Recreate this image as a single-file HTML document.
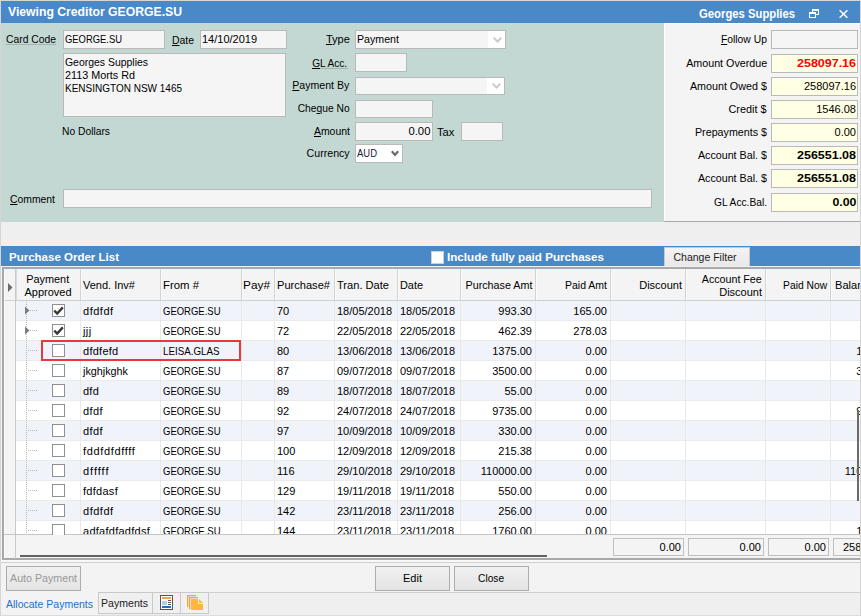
<!DOCTYPE html>
<html><head><meta charset="utf-8"><style>
html,body{margin:0;padding:0;width:861px;height:616px;overflow:hidden;background:#f0f0f0;font-family:"Liberation Sans", sans-serif}
#root{position:relative;width:861px;height:616px;overflow:hidden}
#root>div,#root>svg{position:absolute}
u{text-decoration:underline;text-underline-offset:1px}
</style></head><body><div id="root">
<div style="left:0px;top:0px;width:861px;height:616px;background:#f0f0f0"></div>
<div style="left:0px;top:0px;width:861px;height:1px;background:#d6d6d6"></div>
<div style="left:0px;top:0px;width:1px;height:616px;background:#d6d6d6"></div>
<div style="left:860px;top:0px;width:1px;height:616px;background:#dcdcdc"></div>
<div style="left:1px;top:1px;width:859px;height:22px;background:#4a89c8"></div>
<svg style="left:808px;top:8px" width="12" height="11" viewBox="0 0 12 11" shape-rendering="crispEdges" fill="#fff"><rect x="4" y="1" width="7" height="2"/><rect x="10" y="1" width="1" height="6"/><rect x="8" y="6" width="3" height="1"/><rect x="4" y="1" width="1" height="3"/><rect x="1" y="4" width="7" height="2"/><rect x="1" y="4" width="1" height="6"/><rect x="7" y="4" width="1" height="6"/><rect x="1" y="9" width="7" height="1"/></svg>
<svg style="left:839px;top:10px" width="9" height="8" viewBox="0 0 9 8"><path d="M0.6 0.3L8.4 7.7M8.4 0.3L0.6 7.7" stroke="#fff" stroke-width="1.5"/></svg>
<div style="left:1px;top:23px;width:663px;height:199px;background:#c3d8d2"></div>
<div style="left:664px;top:23px;width:196px;height:198px;background:#f4f4f4;border-left:1px solid #fff;border-top:1px solid #fff;box-sizing:border-box"></div>
<div style="left:664px;top:221px;width:196px;height:1px;background:#a9a9a9"></div>
<div style="left:6px;top:44px;width:50px;height:1px;background:#a8b4b0"></div>
<div style="left:63px;top:30px;width:102px;height:19px;background:#f5f5f5;border:1px solid #b9b9b9;box-sizing:border-box"></div>
<div style="left:200px;top:30px;width:87px;height:19px;background:#f5f5f5;border:1px solid #b9b9b9;box-sizing:border-box"></div>
<div style="left:63px;top:53px;width:223px;height:64px;background:#f5f5f5;border:1px solid #b9b9b9;box-sizing:border-box"></div>
<div style="left:355px;top:30px;width:151px;height:19px;background:#f5f5f5;border:1px solid #b9b9b9;box-sizing:border-box"></div>
<div style="left:488px;top:31px;width:17px;height:17px;background:#fff"></div>
<div style="left:312px;top:68px;width:36px;height:1px;background:#a8b4b0"></div>
<div style="left:355px;top:53px;width:52px;height:19px;background:#f5f5f5;border:1px solid #b9b9b9;box-sizing:border-box"></div>
<div style="left:355px;top:77px;width:150px;height:18px;background:#f5f5f5;border:1px solid #b9b9b9;box-sizing:border-box"></div>
<div style="left:487px;top:78px;width:17px;height:16px;background:#fff"></div>
<div style="left:355px;top:100px;width:78px;height:18px;background:#f5f5f5;border:1px solid #b9b9b9;box-sizing:border-box"></div>
<div style="left:355px;top:122px;width:78px;height:19px;background:#f5f5f5;border:1px solid #b9b9b9;box-sizing:border-box"></div>
<div style="left:461px;top:122px;width:42px;height:19px;background:#f5f5f5;border:1px solid #b9b9b9;box-sizing:border-box"></div>
<div style="left:355px;top:144px;width:48px;height:19px;background:#fff;border:1px solid #b9b9b9;box-sizing:border-box"></div>
<svg style="left:493px;top:37px" width="9" height="6" viewBox="0 0 9 6"><path d="M0.7 0.7L4.5 4.6L8.3 0.7" fill="none" stroke="#c8c8c8" stroke-width="1.9"/></svg>
<svg style="left:492px;top:83px" width="9" height="6" viewBox="0 0 9 6"><path d="M0.7 0.7L4.5 4.6L8.3 0.7" fill="none" stroke="#c8c8c8" stroke-width="1.9"/></svg>
<svg style="left:391px;top:150px" width="8" height="7" viewBox="0 0 8 7"><path d="M0.8 1.2L4 4.8L7.2 1.2" fill="none" stroke="#6a6a6a" stroke-width="2.1"/></svg>
<div style="left:63px;top:189px;width:589px;height:19px;background:#f5f5f5;border:1px solid #b9b9b9;box-sizing:border-box"></div>
<div style="left:771px;top:30px;width:87px;height:19px;background:#f5f5f5;border:1px solid #b9b9b9;box-sizing:border-box"></div>
<div style="left:771px;top:54px;width:87px;height:19px;background:#ffffe3;border:1px solid #b9b9b9;box-sizing:border-box"></div>
<div style="left:771px;top:77px;width:87px;height:19px;background:#ffffe3;border:1px solid #b9b9b9;box-sizing:border-box"></div>
<div style="left:771px;top:100px;width:87px;height:19px;background:#ffffe3;border:1px solid #b9b9b9;box-sizing:border-box"></div>
<div style="left:771px;top:123px;width:87px;height:19px;background:#ffffe3;border:1px solid #b9b9b9;box-sizing:border-box"></div>
<div style="left:771px;top:146px;width:87px;height:19px;background:#ffffe3;border:1px solid #b9b9b9;box-sizing:border-box"></div>
<div style="left:771px;top:169px;width:87px;height:19px;background:#ffffe3;border:1px solid #b9b9b9;box-sizing:border-box"></div>
<div style="left:771px;top:193px;width:87px;height:19px;background:#ffffe3;border:1px solid #b9b9b9;box-sizing:border-box"></div>
<div style="left:1px;top:222px;width:859px;height:24px;background:#efefef"></div>
<div style="left:1px;top:246px;width:859px;height:20px;background:#4a89c8"></div>
<div style="left:431px;top:251px;width:13px;height:13px;background:#fff;border:1px solid #d0d0d0;box-sizing:border-box"></div>
<div style="left:664px;top:247px;width:86px;height:19px;background:linear-gradient(#f4f4f4,#e8e8e8);border:1px solid #c9c9c9;border-bottom:none;box-sizing:border-box"></div>
<div style="left:1px;top:266px;width:859px;height:300px;background:#f0f0f0"></div>
<div style="left:2px;top:267px;width:858px;height:293px;background:#a9a9a9"></div>
<div style="left:4px;top:269px;width:856px;height:289px;background:#f4f4f4"></div>
<div style="left:4px;top:269px;width:856px;height:31px;background:#f4f4f4"></div>
<div style="left:4px;top:300px;width:856px;height:1px;background:#cfcfcf"></div>
<div style="left:15px;top:269px;width:1px;height:290px;background:#c9c9c9"></div>
<div style="left:16px;top:269px;width:1px;height:31px;background:#dadada"></div>
<div style="left:4px;top:269px;width:1px;height:289px;background:#fafafa"></div>
<div style="left:80px;top:269px;width:1px;height:31px;background:#d2d2d2"></div>
<div style="left:81px;top:269px;width:1px;height:31px;background:#fbfbfb"></div>
<div style="left:160px;top:269px;width:1px;height:31px;background:#d2d2d2"></div>
<div style="left:161px;top:269px;width:1px;height:31px;background:#fbfbfb"></div>
<div style="left:241px;top:269px;width:1px;height:31px;background:#d2d2d2"></div>
<div style="left:242px;top:269px;width:1px;height:31px;background:#fbfbfb"></div>
<div style="left:274px;top:269px;width:1px;height:31px;background:#d2d2d2"></div>
<div style="left:275px;top:269px;width:1px;height:31px;background:#fbfbfb"></div>
<div style="left:334px;top:269px;width:1px;height:31px;background:#d2d2d2"></div>
<div style="left:335px;top:269px;width:1px;height:31px;background:#fbfbfb"></div>
<div style="left:397px;top:269px;width:1px;height:31px;background:#d2d2d2"></div>
<div style="left:398px;top:269px;width:1px;height:31px;background:#fbfbfb"></div>
<div style="left:460px;top:269px;width:1px;height:31px;background:#d2d2d2"></div>
<div style="left:461px;top:269px;width:1px;height:31px;background:#fbfbfb"></div>
<div style="left:535px;top:269px;width:1px;height:31px;background:#d2d2d2"></div>
<div style="left:536px;top:269px;width:1px;height:31px;background:#fbfbfb"></div>
<div style="left:610px;top:269px;width:1px;height:31px;background:#d2d2d2"></div>
<div style="left:611px;top:269px;width:1px;height:31px;background:#fbfbfb"></div>
<div style="left:685px;top:269px;width:1px;height:31px;background:#d2d2d2"></div>
<div style="left:686px;top:269px;width:1px;height:31px;background:#fbfbfb"></div>
<div style="left:765px;top:269px;width:1px;height:31px;background:#d2d2d2"></div>
<div style="left:766px;top:269px;width:1px;height:31px;background:#fbfbfb"></div>
<div style="left:830px;top:269px;width:1px;height:31px;background:#d2d2d2"></div>
<div style="left:831px;top:269px;width:1px;height:31px;background:#fbfbfb"></div>
<svg style="left:8px;top:283px" width="5" height="9" viewBox="0 0 5 9"><path d="M0 0L4.5 4.5L0 9z" fill="#6b6b6b"/></svg>
<div style="left:16px;top:301px;width:844px;height:19px;background:#f0f3f9"></div>
<div style="left:16px;top:320px;width:844px;height:20px;background:#ffffff"></div>
<div style="left:16px;top:320px;width:844px;height:1px;background:#ebebeb"></div>
<div style="left:16px;top:340px;width:844px;height:20px;background:#f0f3f9"></div>
<div style="left:16px;top:340px;width:844px;height:1px;background:#ebebeb"></div>
<div style="left:16px;top:360px;width:844px;height:20px;background:#ffffff"></div>
<div style="left:16px;top:360px;width:844px;height:1px;background:#ebebeb"></div>
<div style="left:16px;top:380px;width:844px;height:20px;background:#f0f3f9"></div>
<div style="left:16px;top:380px;width:844px;height:1px;background:#ebebeb"></div>
<div style="left:16px;top:400px;width:844px;height:20px;background:#ffffff"></div>
<div style="left:16px;top:400px;width:844px;height:1px;background:#ebebeb"></div>
<div style="left:16px;top:420px;width:844px;height:20px;background:#f0f3f9"></div>
<div style="left:16px;top:420px;width:844px;height:1px;background:#ebebeb"></div>
<div style="left:16px;top:440px;width:844px;height:20px;background:#ffffff"></div>
<div style="left:16px;top:440px;width:844px;height:1px;background:#ebebeb"></div>
<div style="left:16px;top:460px;width:844px;height:20px;background:#f0f3f9"></div>
<div style="left:16px;top:460px;width:844px;height:1px;background:#ebebeb"></div>
<div style="left:16px;top:480px;width:844px;height:20px;background:#ffffff"></div>
<div style="left:16px;top:480px;width:844px;height:1px;background:#ebebeb"></div>
<div style="left:16px;top:500px;width:844px;height:20px;background:#f0f3f9"></div>
<div style="left:16px;top:500px;width:844px;height:1px;background:#ebebeb"></div>
<div style="left:16px;top:520px;width:844px;height:14px;background:#ffffff"></div>
<div style="left:16px;top:520px;width:844px;height:1px;background:#ebebeb"></div>
<div style="left:80px;top:301px;width:1px;height:233px;background:#e9e9e9"></div>
<div style="left:160px;top:301px;width:1px;height:233px;background:#e9e9e9"></div>
<div style="left:241px;top:301px;width:1px;height:233px;background:#e9e9e9"></div>
<div style="left:274px;top:301px;width:1px;height:233px;background:#e9e9e9"></div>
<div style="left:334px;top:301px;width:1px;height:233px;background:#e9e9e9"></div>
<div style="left:397px;top:301px;width:1px;height:233px;background:#e9e9e9"></div>
<div style="left:460px;top:301px;width:1px;height:233px;background:#e9e9e9"></div>
<div style="left:535px;top:301px;width:1px;height:233px;background:#e9e9e9"></div>
<div style="left:610px;top:301px;width:1px;height:233px;background:#e9e9e9"></div>
<div style="left:685px;top:301px;width:1px;height:233px;background:#e9e9e9"></div>
<div style="left:765px;top:301px;width:1px;height:233px;background:#e9e9e9"></div>
<div style="left:830px;top:301px;width:1px;height:233px;background:#e9e9e9"></div>
<div style="left:4px;top:534px;width:856px;height:1px;background:#c4c4c4"></div>
<div style="left:26px;top:300px;width:1px;height:234px;background:repeating-linear-gradient(#b8b8b8 0 1px,transparent 1px 2px)"></div>
<div style="left:28px;top:310px;width:9px;height:1px;background:repeating-linear-gradient(90deg,#b8b8b8 0 1px,transparent 1px 2px)"></div>
<svg style="left:25px;top:306px" width="5" height="9" viewBox="0 0 5 9"><path d="M0 0.5L4.5 4.5L0 8.5z" fill="#7a7a7a"/></svg>
<div style="left:52px;top:304px;width:13px;height:13px;background:#fff;border:1px solid #8f8f8f;box-sizing:border-box"></div>
<svg style="left:52px;top:304px" width="13" height="13" viewBox="0 0 13 13"><path d="M2.3 6.6L5.2 9.6L10.8 3.4" fill="none" stroke="#383838" stroke-width="2.4"/></svg>
<div style="left:28px;top:330px;width:9px;height:1px;background:repeating-linear-gradient(90deg,#b8b8b8 0 1px,transparent 1px 2px)"></div>
<svg style="left:25px;top:326px" width="5" height="9" viewBox="0 0 5 9"><path d="M0 0.5L4.5 4.5L0 8.5z" fill="#7a7a7a"/></svg>
<div style="left:52px;top:324px;width:13px;height:13px;background:#fff;border:1px solid #8f8f8f;box-sizing:border-box"></div>
<svg style="left:52px;top:324px" width="13" height="13" viewBox="0 0 13 13"><path d="M2.3 6.6L5.2 9.6L10.8 3.4" fill="none" stroke="#383838" stroke-width="2.4"/></svg>
<div style="left:28px;top:350px;width:9px;height:1px;background:repeating-linear-gradient(90deg,#b8b8b8 0 1px,transparent 1px 2px)"></div>
<div style="left:52px;top:344px;width:13px;height:13px;background:#fff;border:1px solid #8f8f8f;box-sizing:border-box"></div>
<div style="left:28px;top:370px;width:9px;height:1px;background:repeating-linear-gradient(90deg,#b8b8b8 0 1px,transparent 1px 2px)"></div>
<div style="left:52px;top:364px;width:13px;height:13px;background:#fff;border:1px solid #8f8f8f;box-sizing:border-box"></div>
<div style="left:28px;top:390px;width:9px;height:1px;background:repeating-linear-gradient(90deg,#b8b8b8 0 1px,transparent 1px 2px)"></div>
<div style="left:52px;top:384px;width:13px;height:13px;background:#fff;border:1px solid #8f8f8f;box-sizing:border-box"></div>
<div style="left:28px;top:410px;width:9px;height:1px;background:repeating-linear-gradient(90deg,#b8b8b8 0 1px,transparent 1px 2px)"></div>
<div style="left:52px;top:404px;width:13px;height:13px;background:#fff;border:1px solid #8f8f8f;box-sizing:border-box"></div>
<div style="left:28px;top:430px;width:9px;height:1px;background:repeating-linear-gradient(90deg,#b8b8b8 0 1px,transparent 1px 2px)"></div>
<div style="left:52px;top:424px;width:13px;height:13px;background:#fff;border:1px solid #8f8f8f;box-sizing:border-box"></div>
<div style="left:28px;top:450px;width:9px;height:1px;background:repeating-linear-gradient(90deg,#b8b8b8 0 1px,transparent 1px 2px)"></div>
<div style="left:52px;top:444px;width:13px;height:13px;background:#fff;border:1px solid #8f8f8f;box-sizing:border-box"></div>
<div style="left:28px;top:470px;width:9px;height:1px;background:repeating-linear-gradient(90deg,#b8b8b8 0 1px,transparent 1px 2px)"></div>
<div style="left:52px;top:464px;width:13px;height:13px;background:#fff;border:1px solid #8f8f8f;box-sizing:border-box"></div>
<div style="left:28px;top:490px;width:9px;height:1px;background:repeating-linear-gradient(90deg,#b8b8b8 0 1px,transparent 1px 2px)"></div>
<div style="left:52px;top:484px;width:13px;height:13px;background:#fff;border:1px solid #8f8f8f;box-sizing:border-box"></div>
<div style="left:28px;top:510px;width:9px;height:1px;background:repeating-linear-gradient(90deg,#b8b8b8 0 1px,transparent 1px 2px)"></div>
<div style="left:52px;top:504px;width:13px;height:13px;background:#fff;border:1px solid #8f8f8f;box-sizing:border-box"></div>
<div style="left:28px;top:530px;width:9px;height:1px;background:repeating-linear-gradient(90deg,#b8b8b8 0 1px,transparent 1px 2px)"></div>
<div style="left:52px;top:524px;width:13px;height:13px;background:#fff;border:1px solid #8f8f8f;box-sizing:border-box"></div>
<div style="left:41px;top:340px;width:200px;height:21px;border:2px solid #e8383a;box-sizing:border-box"></div>
<div style="left:16px;top:535px;width:844px;height:23px;background:#f4f4f4"></div>
<div style="left:613px;top:538px;width:71px;height:18px;background:#f4f4f4;border:1px solid #c0c0c0;box-sizing:border-box"></div>
<div style="left:688px;top:538px;width:76px;height:18px;background:#f4f4f4;border:1px solid #c0c0c0;box-sizing:border-box"></div>
<div style="left:768px;top:538px;width:61px;height:18px;background:#f4f4f4;border:1px solid #c0c0c0;box-sizing:border-box"></div>
<div style="left:833px;top:538px;width:47px;height:18px;background:#f4f4f4;border:1px solid #c0c0c0;box-sizing:border-box"></div>
<div style="left:20px;top:555px;width:527px;height:2px;background:#626262"></div>
<div style="left:857px;top:410px;width:2px;height:91px;background:#6a6a6a;z-index:5"></div>
<div style="left:1px;top:560px;width:859px;height:2px;background:#f8f8f8"></div>
<div style="left:1px;top:562px;width:859px;height:1px;background:#d0d0d0"></div>
<div style="left:1px;top:563px;width:859px;height:29px;background:#f3f3f3"></div>
<div style="left:6px;top:566px;width:75px;height:25px;background:linear-gradient(#f0f0f0,#e4e4e4);border:1px solid #adadad;box-sizing:border-box"></div>
<div style="left:375px;top:566px;width:75px;height:25px;background:linear-gradient(#f0f0f0,#e4e4e4);border:1px solid #adadad;box-sizing:border-box"></div>
<div style="left:454px;top:566px;width:75px;height:25px;background:linear-gradient(#f0f0f0,#e4e4e4);border:1px solid #adadad;box-sizing:border-box"></div>
<div style="left:1px;top:592px;width:97px;height:23px;background:#f3f3f3"></div>
<div style="left:98px;top:592px;width:762px;height:1px;background:#cfcfcf"></div>
<div style="left:98px;top:593px;width:762px;height:22px;background:#efefef"></div>
<div style="left:1px;top:615px;width:859px;height:1px;background:#dcdcdc"></div>
<div style="left:98px;top:592px;width:55px;height:22px;background:#f0f0f0;border:1px solid #c9c9c9;box-sizing:border-box"></div>
<div style="left:152px;top:592px;width:29px;height:22px;background:#f0f0f0;border:1px solid #c9c9c9;box-sizing:border-box"></div>
<div style="left:180px;top:592px;width:29px;height:22px;background:#f0f0f0;border:1px solid #c9c9c9;box-sizing:border-box"></div>
<svg style="left:160px;top:595px" width="13" height="15" viewBox="0 0 13 15"><rect x="0.5" y="0.5" width="12" height="14" fill="#fff" stroke="#555"/><rect x="2" y="2" width="9" height="2" fill="#eaa84a"/><rect x="2" y="6" width="5" height="4" fill="#a3d5f2"/><path d="M8 5.5h3M8 7.5h3M8 9.5h3" stroke="#555"/><rect x="2" y="11" width="9" height="2" fill="#2d6bb4"/></svg>
<svg style="left:187px;top:595px" width="17" height="16" viewBox="0 0 17 16"><path d="M0.6 12V0.6H9" fill="none" stroke="#e9a43e" stroke-width="1.3"/><path d="M2.6 14V2.6H11" fill="none" stroke="#e9a43e" stroke-width="1.3"/><path d="M4 4H11V9H16V15H4Z" fill="#ffb545"/><path d="M12 4L16 8H12Z" fill="#ffb545"/></svg>
<div style="left:860px;top:0px;width:1px;height:616px;background:#d4d4d4"></div>
<div style="position:absolute;left:8px;top:5px;font-weight:bold;font-size:12px;line-height:14px;color:#fff;white-space:nowrap;transform:scaleX(1.0167);transform-origin:left 0;">Viewing Creditor GEORGE.SU</div>
<div style="position:absolute;left:692.97px;top:7px;font-weight:bold;font-size:12px;line-height:14px;color:#fff;white-space:nowrap;transform:scaleX(0.9409);transform-origin:right 0;">Georges Supplies</div>
<div style="position:absolute;left:6px;top:33px;font-weight:normal;font-size:11px;line-height:13px;color:#000;white-space:nowrap;transform:scaleX(0.9398);transform-origin:left 0;">Card Code</div>
<div style="position:absolute;left:65px;top:33px;font-weight:normal;font-size:11px;line-height:13px;color:#000;white-space:nowrap;transform:scaleX(0.8555);transform-origin:left 0;">GEORGE.SU</div>
<div style="position:absolute;left:172px;top:34px;font-weight:normal;font-size:11px;line-height:13px;color:#000;white-space:nowrap;transform:scaleX(0.9462);transform-origin:left 0;"><u>D</u>ate</div>
<div style="position:absolute;left:202px;top:33px;font-weight:normal;font-size:11px;line-height:13px;color:#000;white-space:nowrap;">14/10/2019</div>
<div style="position:absolute;left:65px;top:56px;font-weight:normal;font-size:11px;line-height:13px;color:#000;white-space:nowrap;transform:scaleX(0.9491);transform-origin:left 0;">Georges Supplies</div>
<div style="position:absolute;left:65px;top:69px;font-weight:normal;font-size:11px;line-height:13px;color:#000;white-space:nowrap;transform:scaleX(0.9814);transform-origin:left 0;">2113 Morts Rd</div>
<div style="position:absolute;left:65px;top:82px;font-weight:normal;font-size:11px;line-height:13px;color:#000;white-space:nowrap;transform:scaleX(0.9085);transform-origin:left 0;">KENSINGTON NSW 1465</div>
<div style="position:absolute;left:62px;top:125px;font-weight:normal;font-size:11px;line-height:13px;color:#000;white-space:nowrap;transform:scaleX(0.9346);transform-origin:left 0;">No Dollars</div>
<div style="position:absolute;left:325.82px;top:33px;font-weight:normal;font-size:11px;line-height:13px;color:#000;white-space:nowrap;transform:scaleX(1.0052);transform-origin:right 0;"><u>T</u>ype</div>
<div style="position:absolute;left:357px;top:33px;font-weight:normal;font-size:11px;line-height:13px;color:#000;white-space:nowrap;transform:scaleX(0.9673);transform-origin:left 0;">Payment</div>
<div style="position:absolute;left:309.38px;top:57px;font-weight:normal;font-size:11px;line-height:13px;color:#000;white-space:nowrap;transform:scaleX(0.9180);transform-origin:right 0;"><u>G</u>L Acc.</div>
<div style="position:absolute;left:290.39px;top:79px;font-weight:normal;font-size:11px;line-height:13px;color:#000;white-space:nowrap;transform:scaleX(0.9610);transform-origin:right 0;"><u>P</u>ayment By</div>
<div style="position:absolute;left:294.03px;top:102px;font-weight:normal;font-size:11px;line-height:13px;color:#000;white-space:nowrap;transform:scaleX(0.9340);transform-origin:right 0;">Che<u>q</u>ue No</div>
<div style="position:absolute;left:311.78px;top:125px;font-weight:normal;font-size:11px;line-height:13px;color:#000;white-space:nowrap;transform:scaleX(0.9493);transform-origin:right 0;"><u>A</u>mount</div>
<div style="position:absolute;left:408.58px;top:125px;font-weight:normal;font-size:11px;line-height:13px;color:#000;white-space:nowrap;transform:scaleX(1.0270);transform-origin:right 0;">0.00</div>
<div style="position:absolute;left:437px;top:126px;font-weight:normal;font-size:11px;line-height:13px;color:#000;white-space:nowrap;transform:scaleX(1.0219);transform-origin:left 0;">Tax</div>
<div style="position:absolute;left:305.07px;top:147px;font-weight:normal;font-size:11px;line-height:13px;color:#000;white-space:nowrap;transform:scaleX(0.9636);transform-origin:right 0;">Currency</div>
<div style="position:absolute;left:357px;top:147px;font-weight:normal;font-size:11px;line-height:13px;color:#20203a;white-space:nowrap;transform:scaleX(0.8608);transform-origin:left 0;">AUD</div>
<div style="position:absolute;left:10px;top:193px;font-weight:normal;font-size:11px;line-height:13px;color:#000;white-space:nowrap;transform:scaleX(0.9433);transform-origin:left 0;"><u>C</u>omment</div>
<div style="position:absolute;left:718.08px;top:33px;font-weight:normal;font-size:11px;line-height:13px;color:#000;white-space:nowrap;transform:scaleX(0.9403);transform-origin:right 0;"><u>F</u>ollow Up</div>
<div style="position:absolute;left:683.84px;top:57px;font-weight:normal;font-size:11px;line-height:13px;color:#000;white-space:nowrap;transform:scaleX(0.9741);transform-origin:right 0;">Amount Overdue</div>
<div style="position:absolute;left:804.00px;top:57px;font-weight:bold;font-size:11px;line-height:13px;color:#ff0000;white-space:nowrap;transform:scaleX(1.1346);transform-origin:right 0;">258097.16</div>
<div style="position:absolute;left:688.12px;top:80px;font-weight:normal;font-size:11px;line-height:13px;color:#000;white-space:nowrap;transform:scaleX(0.9762);transform-origin:right 0;">Amount Owed $</div>
<div style="position:absolute;left:804.00px;top:80px;font-weight:normal;font-size:11px;line-height:13px;color:#000;white-space:nowrap;">258097.16</div>
<div style="position:absolute;left:728.47px;top:103px;font-weight:normal;font-size:11px;line-height:13px;color:#000;white-space:nowrap;transform:scaleX(0.9862);transform-origin:right 0;">Credit $</div>
<div style="position:absolute;left:816.23px;top:103px;font-weight:normal;font-size:11px;line-height:13px;color:#000;white-space:nowrap;">1546.08</div>
<div style="position:absolute;left:693.02px;top:126px;font-weight:normal;font-size:11px;line-height:13px;color:#000;white-space:nowrap;transform:scaleX(0.9732);transform-origin:right 0;">Prepayments $</div>
<div style="position:absolute;left:834.58px;top:126px;font-weight:normal;font-size:11px;line-height:13px;color:#000;white-space:nowrap;">0.00</div>
<div style="position:absolute;left:696.06px;top:149px;font-weight:normal;font-size:11px;line-height:13px;color:#000;white-space:nowrap;transform:scaleX(0.9727);transform-origin:right 0;">Account Bal. $</div>
<div style="position:absolute;left:804.00px;top:149px;font-weight:bold;font-size:11px;line-height:13px;color:#000;white-space:nowrap;transform:scaleX(1.1346);transform-origin:right 0;">256551.08</div>
<div style="position:absolute;left:696.06px;top:172px;font-weight:normal;font-size:11px;line-height:13px;color:#000;white-space:nowrap;transform:scaleX(0.9727);transform-origin:right 0;">Account Bal. $</div>
<div style="position:absolute;left:804.00px;top:172px;font-weight:bold;font-size:11px;line-height:13px;color:#000;white-space:nowrap;transform:scaleX(1.1346);transform-origin:right 0;">256551.08</div>
<div style="position:absolute;left:709.94px;top:196px;font-weight:normal;font-size:11px;line-height:13px;color:#000;white-space:nowrap;transform:scaleX(0.9288);transform-origin:right 0;">GL Acc.Bal.</div>
<div style="position:absolute;left:834.58px;top:196px;font-weight:bold;font-size:11px;line-height:13px;color:#000;white-space:nowrap;transform:scaleX(1.1204);transform-origin:right 0;">0.00</div>
<div style="position:absolute;left:9px;top:251px;font-weight:bold;font-size:11px;line-height:13px;color:#fff;white-space:nowrap;transform:scaleX(1.0461);transform-origin:left 0;">Purchase Order List</div>
<div style="position:absolute;left:447px;top:251px;font-weight:bold;font-size:11px;line-height:13px;color:#fff;white-space:nowrap;transform:scaleX(1.0569);transform-origin:left 0;">Include fully paid Purchases</div>
<div style="position:absolute;left:671.98px;top:251px;font-weight:normal;font-size:11px;line-height:13px;color:#222;white-space:nowrap;transform:scaleX(0.9539);transform-origin:center 0;">Change Filter</div>
<div style="position:absolute;left:26.29px;top:273px;font-weight:normal;font-size:11px;line-height:13px;color:#000;white-space:nowrap;transform:scaleX(0.9903);transform-origin:center 0;">Payment</div>
<div style="position:absolute;left:24.45px;top:286px;font-weight:normal;font-size:11px;line-height:13px;color:#000;white-space:nowrap;">Approved</div>
<div style="position:absolute;left:83px;top:279px;font-weight:normal;font-size:11px;line-height:13px;color:#000;white-space:nowrap;">Vend. Inv#</div>
<div style="position:absolute;left:163px;top:279px;font-weight:normal;font-size:11px;line-height:13px;color:#000;white-space:nowrap;transform:scaleX(1.0332);transform-origin:left 0;">From #</div>
<div style="position:absolute;left:243px;top:279px;font-weight:normal;font-size:11px;line-height:13px;color:#000;white-space:nowrap;transform:scaleX(1.0766);transform-origin:left 0;">Pay#</div>
<div style="position:absolute;left:277px;top:279px;font-weight:normal;font-size:11px;line-height:13px;color:#000;white-space:nowrap;transform:scaleX(1.0077);transform-origin:left 0;">Purchase#</div>
<div style="position:absolute;left:337px;top:279px;font-weight:normal;font-size:11px;line-height:13px;color:#000;white-space:nowrap;transform:scaleX(1.0085);transform-origin:left 0;">Tran. Date</div>
<div style="position:absolute;left:400px;top:279px;font-weight:normal;font-size:11px;line-height:13px;color:#000;white-space:nowrap;transform:scaleX(0.9892);transform-origin:left 0;">Date</div>
<div style="position:absolute;left:463.52px;top:279px;font-weight:normal;font-size:11px;line-height:13px;color:#000;white-space:nowrap;transform:scaleX(0.9783);transform-origin:right 0;">Purchase Amt</div>
<div style="position:absolute;left:562.97px;top:279px;font-weight:normal;font-size:11px;line-height:13px;color:#000;white-space:nowrap;transform:scaleX(0.9539);transform-origin:right 0;">Paid Amt</div>
<div style="position:absolute;left:639.20px;top:279px;font-weight:normal;font-size:11px;line-height:13px;color:#000;white-space:nowrap;">Discount</div>
<div style="position:absolute;left:700.23px;top:273px;font-weight:normal;font-size:11px;line-height:13px;color:#000;white-space:nowrap;transform:scaleX(0.9714);transform-origin:right 0;">Account Fee</div>
<div style="position:absolute;left:719.20px;top:286px;font-weight:normal;font-size:11px;line-height:13px;color:#000;white-space:nowrap;">Discount</div>
<div style="position:absolute;left:779.92px;top:279px;font-weight:normal;font-size:11px;line-height:13px;color:#000;white-space:nowrap;transform:scaleX(0.9346);transform-origin:right 0;">Paid Now</div>
<div style="position:absolute;left:659.58px;top:541px;font-weight:normal;font-size:11px;line-height:13px;color:#000;white-space:nowrap;">0.00</div>
<div style="position:absolute;left:739.58px;top:541px;font-weight:normal;font-size:11px;line-height:13px;color:#000;white-space:nowrap;">0.00</div>
<div style="position:absolute;left:804.58px;top:541px;font-weight:normal;font-size:11px;line-height:13px;color:#000;white-space:nowrap;">0.00</div>
<div style="position:absolute;left:8.95px;top:572px;font-weight:normal;font-size:11px;line-height:13px;color:#9a9a9a;white-space:nowrap;transform:scaleX(0.9697);transform-origin:center 0;">Auto Payment</div>
<div style="position:absolute;left:403.02px;top:572px;font-weight:normal;font-size:11px;line-height:13px;color:#000;white-space:nowrap;">Edit</div>
<div style="position:absolute;left:477.44px;top:572px;font-weight:normal;font-size:11px;line-height:13px;color:#000;white-space:nowrap;transform:scaleX(0.9244);transform-origin:center 0;">Close</div>
<div style="position:absolute;left:6px;top:598px;font-weight:normal;font-size:11px;line-height:13px;color:#1f6fd0;white-space:nowrap;transform:scaleX(0.9549);transform-origin:left 0;">Allocate Payments</div>
<div style="position:absolute;left:101px;top:597px;font-weight:normal;font-size:11px;line-height:13px;color:#222;white-space:nowrap;transform:scaleX(0.9607);transform-origin:left 0;">Payments</div>
<div style="left:4px;top:300px;width:856px;height:234px;overflow:hidden"><div style="position:absolute;left:79px;top:5px;font-weight:normal;font-size:11px;line-height:13px;color:#000;white-space:nowrap;letter-spacing:0.511px;">dfdfdf</div><div style="position:absolute;left:159px;top:5px;font-weight:normal;font-size:11px;line-height:13px;color:#000;white-space:nowrap;transform:scaleX(0.8630);transform-origin:left 0;">GEORGE.SU</div><div style="position:absolute;left:273px;top:5px;font-weight:normal;font-size:11px;line-height:13px;color:#000;white-space:nowrap;">70</div><div style="position:absolute;left:333px;top:5px;font-weight:normal;font-size:11px;line-height:13px;color:#000;white-space:nowrap;">18/05/2018</div><div style="position:absolute;left:396px;top:5px;font-weight:normal;font-size:11px;line-height:13px;color:#000;white-space:nowrap;">18/05/2018</div><div style="position:absolute;left:494.34px;top:5px;font-weight:normal;font-size:11px;line-height:13px;color:#000;white-space:nowrap;">993.30</div><div style="position:absolute;left:569.34px;top:5px;font-weight:normal;font-size:11px;line-height:13px;color:#000;white-space:nowrap;">165.00</div><div style="position:absolute;left:79px;top:25px;font-weight:normal;font-size:11px;line-height:13px;color:#000;white-space:nowrap;letter-spacing:0.385px;">jjj</div><div style="position:absolute;left:159px;top:25px;font-weight:normal;font-size:11px;line-height:13px;color:#000;white-space:nowrap;transform:scaleX(0.8630);transform-origin:left 0;">GEORGE.SU</div><div style="position:absolute;left:273px;top:25px;font-weight:normal;font-size:11px;line-height:13px;color:#000;white-space:nowrap;">72</div><div style="position:absolute;left:333px;top:25px;font-weight:normal;font-size:11px;line-height:13px;color:#000;white-space:nowrap;">22/05/2018</div><div style="position:absolute;left:396px;top:25px;font-weight:normal;font-size:11px;line-height:13px;color:#000;white-space:nowrap;">22/05/2018</div><div style="position:absolute;left:494.34px;top:25px;font-weight:normal;font-size:11px;line-height:13px;color:#000;white-space:nowrap;">462.39</div><div style="position:absolute;left:569.34px;top:25px;font-weight:normal;font-size:11px;line-height:13px;color:#000;white-space:nowrap;">278.03</div><div style="position:absolute;left:79px;top:45px;font-weight:normal;font-size:11px;line-height:13px;color:#000;white-space:nowrap;letter-spacing:0.266px;">dfdfefd</div><div style="position:absolute;left:159px;top:45px;font-weight:normal;font-size:11px;line-height:13px;color:#000;white-space:nowrap;transform:scaleX(0.8885);transform-origin:left 0;">LEISA.GLAS</div><div style="position:absolute;left:273px;top:45px;font-weight:normal;font-size:11px;line-height:13px;color:#000;white-space:nowrap;">80</div><div style="position:absolute;left:333px;top:45px;font-weight:normal;font-size:11px;line-height:13px;color:#000;white-space:nowrap;">13/06/2018</div><div style="position:absolute;left:396px;top:45px;font-weight:normal;font-size:11px;line-height:13px;color:#000;white-space:nowrap;">13/06/2018</div><div style="position:absolute;left:488.23px;top:45px;font-weight:normal;font-size:11px;line-height:13px;color:#000;white-space:nowrap;">1375.00</div><div style="position:absolute;left:581.58px;top:45px;font-weight:normal;font-size:11px;line-height:13px;color:#000;white-space:nowrap;">0.00</div><div style="position:absolute;left:79px;top:65px;font-weight:normal;font-size:11px;line-height:13px;color:#000;white-space:nowrap;transform:scaleX(0.9813);transform-origin:left 0;">jkghjkghk</div><div style="position:absolute;left:159px;top:65px;font-weight:normal;font-size:11px;line-height:13px;color:#000;white-space:nowrap;transform:scaleX(0.8630);transform-origin:left 0;">GEORGE.SU</div><div style="position:absolute;left:273px;top:65px;font-weight:normal;font-size:11px;line-height:13px;color:#000;white-space:nowrap;">87</div><div style="position:absolute;left:333px;top:65px;font-weight:normal;font-size:11px;line-height:13px;color:#000;white-space:nowrap;">09/07/2018</div><div style="position:absolute;left:396px;top:65px;font-weight:normal;font-size:11px;line-height:13px;color:#000;white-space:nowrap;">09/07/2018</div><div style="position:absolute;left:488.23px;top:65px;font-weight:normal;font-size:11px;line-height:13px;color:#000;white-space:nowrap;">3500.00</div><div style="position:absolute;left:581.58px;top:65px;font-weight:normal;font-size:11px;line-height:13px;color:#000;white-space:nowrap;">0.00</div><div style="position:absolute;left:79px;top:85px;font-weight:normal;font-size:11px;line-height:13px;color:#000;white-space:nowrap;letter-spacing:0.234px;">dfd</div><div style="position:absolute;left:159px;top:85px;font-weight:normal;font-size:11px;line-height:13px;color:#000;white-space:nowrap;transform:scaleX(0.8630);transform-origin:left 0;">GEORGE.SU</div><div style="position:absolute;left:273px;top:85px;font-weight:normal;font-size:11px;line-height:13px;color:#000;white-space:nowrap;">89</div><div style="position:absolute;left:333px;top:85px;font-weight:normal;font-size:11px;line-height:13px;color:#000;white-space:nowrap;">18/07/2018</div><div style="position:absolute;left:396px;top:85px;font-weight:normal;font-size:11px;line-height:13px;color:#000;white-space:nowrap;">18/07/2018</div><div style="position:absolute;left:500.47px;top:85px;font-weight:normal;font-size:11px;line-height:13px;color:#000;white-space:nowrap;">55.00</div><div style="position:absolute;left:581.58px;top:85px;font-weight:normal;font-size:11px;line-height:13px;color:#000;white-space:nowrap;">0.00</div><div style="position:absolute;left:79px;top:105px;font-weight:normal;font-size:11px;line-height:13px;color:#000;white-space:nowrap;letter-spacing:0.410px;">dfdf</div><div style="position:absolute;left:159px;top:105px;font-weight:normal;font-size:11px;line-height:13px;color:#000;white-space:nowrap;transform:scaleX(0.8630);transform-origin:left 0;">GEORGE.SU</div><div style="position:absolute;left:273px;top:105px;font-weight:normal;font-size:11px;line-height:13px;color:#000;white-space:nowrap;">92</div><div style="position:absolute;left:333px;top:105px;font-weight:normal;font-size:11px;line-height:13px;color:#000;white-space:nowrap;">24/07/2018</div><div style="position:absolute;left:396px;top:105px;font-weight:normal;font-size:11px;line-height:13px;color:#000;white-space:nowrap;">24/07/2018</div><div style="position:absolute;left:488.23px;top:105px;font-weight:normal;font-size:11px;line-height:13px;color:#000;white-space:nowrap;">9735.00</div><div style="position:absolute;left:581.58px;top:105px;font-weight:normal;font-size:11px;line-height:13px;color:#000;white-space:nowrap;">0.00</div><div style="position:absolute;left:79px;top:125px;font-weight:normal;font-size:11px;line-height:13px;color:#000;white-space:nowrap;letter-spacing:0.410px;">dfdf</div><div style="position:absolute;left:159px;top:125px;font-weight:normal;font-size:11px;line-height:13px;color:#000;white-space:nowrap;transform:scaleX(0.8630);transform-origin:left 0;">GEORGE.SU</div><div style="position:absolute;left:273px;top:125px;font-weight:normal;font-size:11px;line-height:13px;color:#000;white-space:nowrap;">97</div><div style="position:absolute;left:333px;top:125px;font-weight:normal;font-size:11px;line-height:13px;color:#000;white-space:nowrap;">10/09/2018</div><div style="position:absolute;left:396px;top:125px;font-weight:normal;font-size:11px;line-height:13px;color:#000;white-space:nowrap;">10/09/2018</div><div style="position:absolute;left:494.34px;top:125px;font-weight:normal;font-size:11px;line-height:13px;color:#000;white-space:nowrap;">330.00</div><div style="position:absolute;left:581.58px;top:125px;font-weight:normal;font-size:11px;line-height:13px;color:#000;white-space:nowrap;">0.00</div><div style="position:absolute;left:79px;top:145px;font-weight:normal;font-size:11px;line-height:13px;color:#000;white-space:nowrap;letter-spacing:0.656px;">fddfdfdffff</div><div style="position:absolute;left:159px;top:145px;font-weight:normal;font-size:11px;line-height:13px;color:#000;white-space:nowrap;transform:scaleX(0.8630);transform-origin:left 0;">GEORGE.SU</div><div style="position:absolute;left:273px;top:145px;font-weight:normal;font-size:11px;line-height:13px;color:#000;white-space:nowrap;">100</div><div style="position:absolute;left:333px;top:145px;font-weight:normal;font-size:11px;line-height:13px;color:#000;white-space:nowrap;">12/09/2018</div><div style="position:absolute;left:396px;top:145px;font-weight:normal;font-size:11px;line-height:13px;color:#000;white-space:nowrap;">12/09/2018</div><div style="position:absolute;left:494.34px;top:145px;font-weight:normal;font-size:11px;line-height:13px;color:#000;white-space:nowrap;">215.38</div><div style="position:absolute;left:581.58px;top:145px;font-weight:normal;font-size:11px;line-height:13px;color:#000;white-space:nowrap;">0.00</div><div style="position:absolute;left:79px;top:165px;font-weight:normal;font-size:11px;line-height:13px;color:#000;white-space:nowrap;letter-spacing:0.982px;">dfffff</div><div style="position:absolute;left:159px;top:165px;font-weight:normal;font-size:11px;line-height:13px;color:#000;white-space:nowrap;transform:scaleX(0.8630);transform-origin:left 0;">GEORGE.SU</div><div style="position:absolute;left:273px;top:165px;font-weight:normal;font-size:11px;line-height:13px;color:#000;white-space:nowrap;">116</div><div style="position:absolute;left:333px;top:165px;font-weight:normal;font-size:11px;line-height:13px;color:#000;white-space:nowrap;">29/10/2018</div><div style="position:absolute;left:396px;top:165px;font-weight:normal;font-size:11px;line-height:13px;color:#000;white-space:nowrap;">29/10/2018</div><div style="position:absolute;left:476.81px;top:165px;font-weight:normal;font-size:11px;line-height:13px;color:#000;white-space:nowrap;">110000.00</div><div style="position:absolute;left:581.58px;top:165px;font-weight:normal;font-size:11px;line-height:13px;color:#000;white-space:nowrap;">0.00</div><div style="position:absolute;left:79px;top:185px;font-weight:normal;font-size:11px;line-height:13px;color:#000;white-space:nowrap;letter-spacing:0.281px;">fdfdasf</div><div style="position:absolute;left:159px;top:185px;font-weight:normal;font-size:11px;line-height:13px;color:#000;white-space:nowrap;transform:scaleX(0.8630);transform-origin:left 0;">GEORGE.SU</div><div style="position:absolute;left:273px;top:185px;font-weight:normal;font-size:11px;line-height:13px;color:#000;white-space:nowrap;">129</div><div style="position:absolute;left:333px;top:185px;font-weight:normal;font-size:11px;line-height:13px;color:#000;white-space:nowrap;">19/11/2018</div><div style="position:absolute;left:396px;top:185px;font-weight:normal;font-size:11px;line-height:13px;color:#000;white-space:nowrap;">19/11/2018</div><div style="position:absolute;left:494.34px;top:185px;font-weight:normal;font-size:11px;line-height:13px;color:#000;white-space:nowrap;">550.00</div><div style="position:absolute;left:581.58px;top:185px;font-weight:normal;font-size:11px;line-height:13px;color:#000;white-space:nowrap;">0.00</div><div style="position:absolute;left:79px;top:205px;font-weight:normal;font-size:11px;line-height:13px;color:#000;white-space:nowrap;letter-spacing:0.511px;">dfdfdf</div><div style="position:absolute;left:159px;top:205px;font-weight:normal;font-size:11px;line-height:13px;color:#000;white-space:nowrap;transform:scaleX(0.8630);transform-origin:left 0;">GEORGE.SU</div><div style="position:absolute;left:273px;top:205px;font-weight:normal;font-size:11px;line-height:13px;color:#000;white-space:nowrap;">142</div><div style="position:absolute;left:333px;top:205px;font-weight:normal;font-size:11px;line-height:13px;color:#000;white-space:nowrap;">23/11/2018</div><div style="position:absolute;left:396px;top:205px;font-weight:normal;font-size:11px;line-height:13px;color:#000;white-space:nowrap;">23/11/2018</div><div style="position:absolute;left:494.34px;top:205px;font-weight:normal;font-size:11px;line-height:13px;color:#000;white-space:nowrap;">256.00</div><div style="position:absolute;left:581.58px;top:205px;font-weight:normal;font-size:11px;line-height:13px;color:#000;white-space:nowrap;">0.00</div><div style="position:absolute;left:79px;top:225px;font-weight:normal;font-size:11px;line-height:13px;color:#000;white-space:nowrap;letter-spacing:0.261px;">adfafdfadfdsf</div><div style="position:absolute;left:159px;top:225px;font-weight:normal;font-size:11px;line-height:13px;color:#000;white-space:nowrap;transform:scaleX(0.8630);transform-origin:left 0;">GEORGE.SU</div><div style="position:absolute;left:273px;top:225px;font-weight:normal;font-size:11px;line-height:13px;color:#000;white-space:nowrap;">144</div><div style="position:absolute;left:333px;top:225px;font-weight:normal;font-size:11px;line-height:13px;color:#000;white-space:nowrap;">23/11/2018</div><div style="position:absolute;left:396px;top:225px;font-weight:normal;font-size:11px;line-height:13px;color:#000;white-space:nowrap;">23/11/2018</div><div style="position:absolute;left:488.23px;top:225px;font-weight:normal;font-size:11px;line-height:13px;color:#000;white-space:nowrap;">1760.00</div><div style="position:absolute;left:581.58px;top:225px;font-weight:normal;font-size:11px;line-height:13px;color:#000;white-space:nowrap;">0.00</div></div>
<div style="left:831px;top:300px;width:29px;height:234px;overflow:hidden"><div style="position:absolute;left:31.34px;top:5px;font-weight:normal;font-size:11px;line-height:13px;color:#000;white-space:nowrap;">828.30</div><div style="position:absolute;left:31.34px;top:25px;font-weight:normal;font-size:11px;line-height:13px;color:#000;white-space:nowrap;">184.36</div><div style="position:absolute;left:25.23px;top:45px;font-weight:normal;font-size:11px;line-height:13px;color:#000;white-space:nowrap;">1375.00</div><div style="position:absolute;left:25.23px;top:65px;font-weight:normal;font-size:11px;line-height:13px;color:#000;white-space:nowrap;">3500.00</div><div style="position:absolute;left:37.47px;top:85px;font-weight:normal;font-size:11px;line-height:13px;color:#000;white-space:nowrap;">55.00</div><div style="position:absolute;left:25.23px;top:105px;font-weight:normal;font-size:11px;line-height:13px;color:#000;white-space:nowrap;">9735.00</div><div style="position:absolute;left:31.34px;top:125px;font-weight:normal;font-size:11px;line-height:13px;color:#000;white-space:nowrap;">330.00</div><div style="position:absolute;left:31.34px;top:145px;font-weight:normal;font-size:11px;line-height:13px;color:#000;white-space:nowrap;">215.38</div><div style="position:absolute;left:13.81px;top:165px;font-weight:normal;font-size:11px;line-height:13px;color:#000;white-space:nowrap;">110000.00</div><div style="position:absolute;left:31.34px;top:185px;font-weight:normal;font-size:11px;line-height:13px;color:#000;white-space:nowrap;">550.00</div><div style="position:absolute;left:31.34px;top:205px;font-weight:normal;font-size:11px;line-height:13px;color:#000;white-space:nowrap;">256.00</div><div style="position:absolute;left:25.23px;top:225px;font-weight:normal;font-size:11px;line-height:13px;color:#000;white-space:nowrap;">1760.00</div></div>
<div style="left:831px;top:269px;width:29px;height:30px;overflow:hidden"><div style="position:absolute;left:4px;top:10px;font-weight:normal;font-size:11px;line-height:13px;color:#000;white-space:nowrap;transform:scaleX(1.0059);transform-origin:left 0;">Balance</div></div>
<div style="left:834px;top:539px;width:26px;height:16px;overflow:hidden"><div style="position:absolute;left:9px;top:2px;font-weight:normal;font-size:11px;line-height:13px;color:#000;white-space:nowrap;">258</div></div>
</div></body></html>
